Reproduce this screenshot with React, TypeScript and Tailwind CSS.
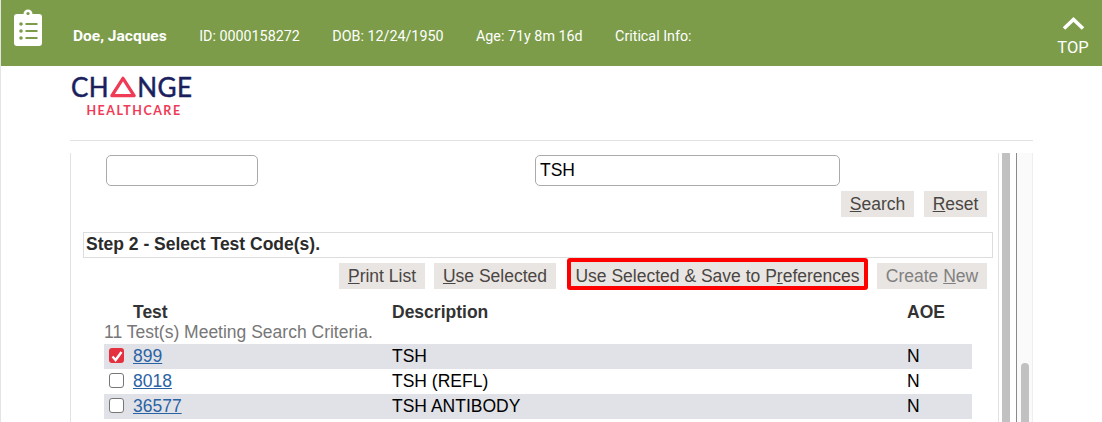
const rows = [
  { code: '899', description: 'TSH', aoe: 'N', checked: true },
  { code: '8018', description: 'TSH (REFL)', aoe: 'N', checked: false },
  { code: '36577', description: 'TSH ANTIBODY', aoe: 'N', checked: false },
];

function ClipboardIcon() {
  return (
    <svg width="28" height="37" viewBox="0 0 28 37" className="block">
      <path
        fill="#ffffff"
        d="M3 5h6.5a4.5 4.5 0 0 1 9 0H25a3 3 0 0 1 3 3v26a3 3 0 0 1-3 3H3a3 3 0 0 1-3-3V8a3 3 0 0 1 3-3z"
      />
      <circle cx="14" cy="4.5" r="1.6" fill="#7c9c4a" />
      <circle cx="7" cy="15" r="1.8" fill="#7c9c4a" />
      <circle cx="7" cy="22" r="1.8" fill="#7c9c4a" />
      <circle cx="7" cy="29" r="1.8" fill="#7c9c4a" />
      <rect x="11.5" y="14" width="12" height="2" fill="#7c9c4a" />
      <rect x="11.5" y="21" width="12" height="2" fill="#7c9c4a" />
      <rect x="11.5" y="28" width="12" height="2" fill="#7c9c4a" />
    </svg>
  );
}

function Logo() {
  return (
    <div className="w-[125px] font-['Lato',sans-serif]">
      <div className="flex items-center h-[24px] text-[26px] leading-none text-[#1b1f5e] [-webkit-text-stroke:0.5px_#1b1f5e]">
        <span className="tracking-[0.5px]">CH</span>
        <svg width="26" height="24" viewBox="0 0 27 24" className="shrink-0 ml-[1px] mr-[1px]">
          <path d="M13.5 3 L25 21 H2 Z" fill="none" stroke="#ef3b55" strokeWidth="3.4" strokeLinejoin="round" />
        </svg>
        <span className="tracking-[0.5px]">NGE</span>
      </div>
      <div className="mt-[5px] pl-[1px] text-center text-[12.5px] leading-[14px] font-bold tracking-[1.5px] text-[#ef3b55]">
        HEALTHCARE
      </div>
    </div>
  );
}

function Btn({
  pre,
  u,
  post,
  size,
  disabled,
}: {
  pre?: string;
  u: string;
  post: string;
  size: string;
  disabled?: boolean;
}) {
  return (
    <div
      className={`${size} bg-[#e9e5e2] flex items-center justify-center text-[17.5px] leading-none ${
        disabled ? 'text-[#808080]' : 'text-[#4a4643]'
      }`}
    >
      <span>
        {pre}
        <span className="underline">{u}</span>
        {post}
      </span>
    </div>
  );
}

export default function App() {
  return (
    <div className="w-[1102px] h-[422px] overflow-hidden bg-white border-l border-[#e4e4e4] font-['Liberation_Sans',Arial,sans-serif]">
      {/* Patient banner */}
      <header className="h-[66px] bg-[#7c9c4a] flex text-white font-['Roboto',sans-serif] text-[14.3px]">
        <div className="pl-[13px] pt-[9px] w-[72px]">
          <ClipboardIcon />
        </div>
        <div className="flex items-center gap-[32.5px] h-[74px]">
          <span className="font-bold text-[15.5px]">Doe, Jacques</span>
          <span>ID: 0000158272</span>
          <span>DOB: 12/24/1950</span>
          <span>Age: 71y 8m 16d</span>
          <span>Critical Info:</span>
        </div>
        <div className="ml-auto w-[58px] flex flex-col items-center pt-[16px]">
          <svg width="23" height="14" viewBox="0 0 23 14" className="block">
            <path d="M2 12.5 L11.5 3.5 L21 12.5" fill="none" stroke="#ffffff" strokeWidth="3.6" />
          </svg>
          <span className="text-[16.5px] leading-[18px] mt-[9px]">TOP</span>
        </div>
      </header>

      {/* Logo */}
      <div className="ml-[69px] w-[963px] h-[75px] border-b border-[#e2e2e2] pt-[9px] pl-[1px]">
        <Logo />
      </div>

      {/* Framed search content */}
      <div className="ml-[69px] w-[963px] mt-[12px] h-[300px] flex">
        <main className="w-[929px] border-l border-r border-[#e2e2e2] pl-[12px] pr-[5px] pt-[2px] text-[17.5px] text-[#222]">
          <div className="flex pl-[23px] gap-[277px]">
            <div className="w-[152px] h-[31px] border border-[#aaaaaa] rounded-[5px]" />
            <div className="w-[305px] h-[31px] border border-[#aaaaaa] rounded-[5px] flex items-center pl-[4px] text-black">
              TSH
            </div>
          </div>
          <div className="flex justify-end gap-[10px] mt-[5px] pr-[6px]">
            <Btn u="S" post="earch" size="w-[73px] h-[26px] pt-[2px]" />
            <Btn u="R" post="eset" size="w-[63px] h-[26px] pt-[2px]" />
          </div>
          <div className="mt-[15px] h-[26px] border border-[#dddddd] pl-[2px] pb-[2px] flex items-center font-bold text-[#2b2b2b]">
            Step 2 - Select Test Code(s).
          </div>
          <div className="flex justify-end items-center gap-[9px] pr-[6px] h-[36px]">
            <Btn u="P" post="rint List" size="w-[86px] h-[26px] pt-[2px]" />
            <Btn u="U" post="se Selected" size="w-[122px] h-[26px] pt-[2px]" />
            <div className="border-[4px] border-[#ff0000] rounded-[3px] ml-[2px] mb-[4px]">
              <Btn pre="Use Selected & Save to P" u="r" post="eferences" size="w-[293px] h-[24px] pt-[6px]" />
            </div>
            <Btn pre="Create " u="N" post="ew" size="w-[110px] h-[26px] pt-[2px]" disabled />
          </div>
          <div className="mt-[7px] pl-[21px] grid grid-cols-[29px_259px_515px_65px]">
            <div />
            <div className="font-bold text-[#333] leading-[22px]">Test</div>
            <div className="font-bold text-[#333] leading-[22px]">Description</div>
            <div className="font-bold text-[#333] leading-[22px]">AOE</div>
            <div className="col-span-4 text-[#777] leading-[18px] h-[21px]">11 Test(s) Meeting Search Criteria.</div>
            {rows.map((r, i) => {
              const bg = i % 2 === 0 ? 'bg-[#e1e2e7]' : 'bg-white';
              return (
                <div
                  key={r.code}
                  className={`col-span-4 grid grid-cols-subgrid h-[25px] items-center pb-[2px] leading-[21px] ${bg}`}
                >
                  <div className="pl-[5px]">
                    {r.checked ? (
                      <div className="w-[15px] h-[15px] rounded-[3px] bg-[#e5303f] flex items-center justify-center">
                        <svg width="12" height="12" viewBox="0 0 12 12">
                          <path d="M1.5 6.5 L4.6 10 L10.5 2" fill="none" stroke="#ffffff" strokeWidth="2.4" />
                        </svg>
                      </div>
                    ) : (
                      <div className="w-[15px] h-[15px] rounded-[3px] border border-[#777] bg-white" />
                    )}
                  </div>
                  <a className="mt-[2px] underline text-[#2a63a4]">{r.code}</a>
                  <div className="mt-[2px] text-black">{r.description}</div>
                  <div className="mt-[2px] text-black">{r.aoe}</div>
                </div>
              );
            })}
          </div>
        </main>
        <div className="w-[8px] ml-[3px] bg-[#c1c1c1]" />
        <div className="w-[1px] ml-[6px] bg-[#8a8a8a]" />
        <div className="flex-1 bg-[#fafafa] border-r border-[#eeeeee] pl-[4px]">
          <div className="mt-[210px] w-[8px] h-[90px] rounded-t-[4px] bg-[#c1c1c1]" />
        </div>
      </div>
    </div>
  );
}
